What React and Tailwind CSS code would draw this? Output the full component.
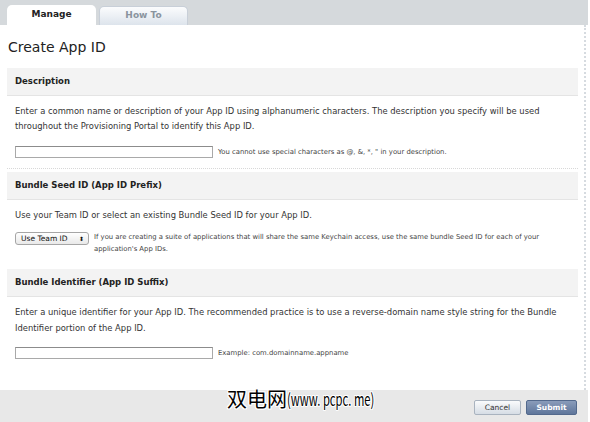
import React from 'react';

const font = { fontFamily: '"DejaVu Sans", "Liberation Sans", sans-serif' };

function SectionHeader({ children }) {
    return (
        <div className="h-[28px] flex items-center px-[8px] bg-[#f3f3f3] border-b border-[#e4e4e4] text-[8.5px] font-bold text-[#222]">
            {children}
        </div>
    );
}

function TextInput() {
    return <div className="w-[198px] h-[12px] bg-white border border-[#a9a9a9] border-t-[#8c8c8c] shrink-0"></div>;
}

export default function App() {
    return (
        <div className="w-[590px] h-[422px] bg-white relative overflow-hidden flex flex-col" style={font}>
            {/* ── Tab strip ── */}
            <div className="w-[588px] h-[25px] bg-[#d5d9dc] flex items-end pl-[7px] gap-[3px] shrink-0">
                <div className="w-[89px] h-[20px] bg-white rounded-t-[5px] flex items-center justify-center text-[9px] font-bold text-[#222]">
                    Manage
                </div>
                <div className="w-[89px] h-[19px] rounded-t-[5px] border border-b-0 border-[#c8cfd8] bg-gradient-to-b from-[#fbfcfd] to-[#dde4ec] flex items-center justify-center text-[9px] font-bold text-[#8a949e]">
                    How To
                </div>
            </div>

            {/* ── Main panel ── */}
            <div className="w-[586px] flex-1 border-r-2 border-dotted border-[#d6dbe0] px-[7px] text-[#333]">
                <div className="h-[43px] flex items-center pl-[1px] pt-[2px] text-[14px] text-[#222]">Create App ID</div>

                <div className="w-[571px]">
                    <SectionHeader>Description</SectionHeader>
                    <div className="px-[8px] pt-[8px] text-[8.4px] leading-[15px]">
                        Enter a common name or description of your App ID using alphanumeric characters. The description you specify will be used throughout the Provisioning Portal to identify this App ID.
                    </div>
                    <div className="flex items-center gap-[5px] px-[8px] mt-[12px]">
                        <TextInput />
                        <span className="text-[6.85px] text-[#444]">You cannot use special characters as @, &amp;, *, " in your description.</span>
                    </div>
                    <div className="mt-[10px] mb-[3px] border-t border-dotted border-[#d8d8d8]"></div>

                    <SectionHeader>Bundle Seed ID (App ID Prefix)</SectionHeader>
                    <div className="px-[8px] pt-[8px] text-[8.4px] leading-[15px]">
                        Use your Team ID or select an existing Bundle Seed ID for your App ID.
                    </div>
                    <div className="flex items-start gap-[5px] px-[8px] mt-[9px]">
                        <div className="w-[74px] h-[13px] shrink-0 rounded-[3px] border border-[#a6a6a6] bg-gradient-to-b from-white to-[#e9e9e9] flex items-center justify-between pl-[5px] pr-[4px] text-[7.5px] text-[#111]">
                            <span>Use Team ID</span>
                            <span className="text-[6px] leading-none">⬍</span>
                        </div>
                        <div className="w-[460px] text-[6.85px] leading-[12px] -mt-[1px] text-[#444]">
                            If you are creating a suite of applications that will share the same Keychain access, use the same bundle Seed ID for each of your application's App IDs.
                        </div>
                    </div>
                    <div className="mt-[14px]"></div>

                    <SectionHeader>Bundle Identifier (App ID Suffix)</SectionHeader>
                    <div className="px-[8px] pt-[7px] text-[8.4px] leading-[16px]">
                        Enter a unique identifier for your App ID. The recommended practice is to use a reverse-domain name style string for the Bundle Identifier portion of the App ID.
                    </div>
                    <div className="flex items-center gap-[5px] px-[8px] mt-[11px]">
                        <TextInput />
                        <span className="text-[6.85px] text-[#444]">Example: com.domainname.appname</span>
                    </div>
                </div>
            </div>

            {/* ── Footer ── */}
            <div className="w-[588px] h-[32px] shrink-0 bg-[#e8e8e8] flex items-center justify-end gap-[5px] pr-[11px] pt-[3px]">
                <button className="w-[47px] h-[15px] rounded-[2px] border border-[#a9b3bf] bg-gradient-to-b from-[#fafbfc] to-[#d6dde5] text-[7.5px] text-[#333]">
                    Cancel
                </button>
                <button className="w-[51px] h-[15px] rounded-[2px] border border-[#53698c] bg-gradient-to-b from-[#8a9cba] to-[#5f769b] text-[7.5px] font-bold text-white">
                    Submit
                </button>
            </div>

            {/* ── Watermark overlay ── */}
            <div
                className="absolute left-[227px] top-[384px] text-[20px] text-black whitespace-nowrap flex items-center"
                style={{
                    fontFamily: '"Noto Sans CJK SC", "DejaVu Sans", sans-serif',
                    textShadow: '1px 0 0 #fff, -1px 0 0 #fff, 0 1px 0 #fff, 0 -1px 0 #fff, 1px 1px 0 #fff, -1px -1px 0 #fff, 1px -1px 0 #fff, -1px 1px 0 #fff'
                }}
            >
                <span>双电网</span>
                <span className="inline-block text-[17px] origin-left scale-x-[0.66]">(www. pcpc. me)</span>
            </div>
        </div>
    );
}
